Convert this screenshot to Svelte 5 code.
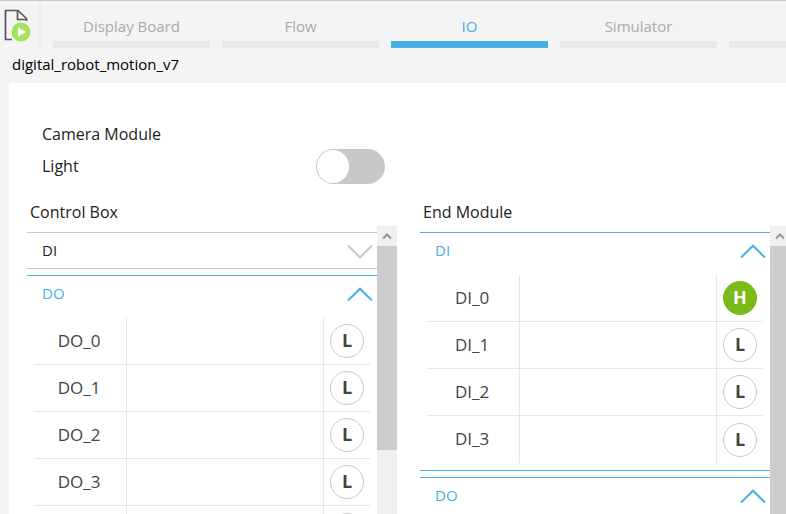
<script>
  const tabs = ['Display Board', 'Flow', 'IO', 'Simulator', ''];
  let activeTab = $state('IO');
  let light = $state(false);

  const channels = (prefix, count, high = []) =>
    Array.from({ length: count }, (_, i) => ({ name: `${prefix}_${i}`, high: high.includes(i) }));

  let modules = $state([
    {
      title: 'Control Box',
      thumb: 76,
      groups: [
        { name: 'DI', open: false, rows: channels('DI', 8) },
        { name: 'DO', open: true, rows: channels('DO', 5) }
      ]
    },
    {
      title: 'End Module',
      thumb: 100,
      groups: [
        { name: 'DI', open: true, rows: channels('DI', 4, [0]) },
        { name: 'DO', open: true, rows: channels('DO', 4) }
      ]
    }
  ]);
</script>

<div class="page">
  <header>
    <button class="run" aria-label="Run project">
      <svg width="28" height="34" viewBox="0 0 28 34" fill="none">
        <path d="M8 30.500H1.500V1.500H14L22.500 9.500V12" stroke="#555" stroke-width="1.700" />
        <path d="M13.500 2V10.500H22.500" stroke="#555" stroke-width="1.700" />
        <circle cx="17" cy="23" r="9.500" fill="#a6e35c" />
        <path d="M14 18.300V27.700L22 23Z" fill="#fff" />
      </svg>
    </button>
    <nav>
      {#each tabs as tab}
        <button class="tab" class:active={tab === activeTab} aria-label={tab || 'More'} onclick={() => (activeTab = tab)}>{tab}</button>
      {/each}
    </nav>
  </header>
  <h1>digital_robot_motion_v7</h1>

  <main>
    <section class="camera">
      <h2>Camera Module</h2>
      <div class="setting">
        <label for="light">Light</label>
        <input id="light" type="checkbox" role="switch" bind:checked={light} />
      </div>
    </section>

    <div class="modules">
      {#each modules as module}
        <section class="module">
          <h2>{module.title}</h2>
          <div class="panel">
            <div class="groups">
              {#each module.groups as group}
                <div class="group" class:open={group.open}>
                  <button class="toggle" aria-expanded={group.open} onclick={() => (group.open = !group.open)}>
                    <span>{group.name}</span>
                    <svg width="26" height="15" viewBox="0 0 26 15" fill="none" stroke="currentColor" stroke-width="2">
                      <path d={group.open ? 'M1 13.500L13 1.700L25 13.500' : 'M1 1.500L13 13.300L25 1.500'} />
                    </svg>
                  </button>
                  {#if group.open}
                    <table>
                      <tbody>
                        {#each group.rows as row}
                          <tr>
                            <th scope="row">{row.name}</th>
                            <td class="note"><input type="text" aria-label="{row.name} label" /></td>
                            <td class="level">
                              <button class:high={row.high} aria-label="{row.name} level" onclick={() => (row.high = !row.high)}>{row.high ? 'H' : 'L'}</button>
                            </td>
                          </tr>
                        {/each}
                      </tbody>
                    </table>
                  {/if}
                </div>
              {/each}
            </div>
            <div class="scrollbar">
              <button aria-label="Scroll up">
                <svg width="10" height="8" viewBox="0 0 10 8" fill="none" stroke="#999" stroke-width="2"><path d="M1 6.500L5 2.500L9 6.500" /></svg>
              </button>
              <div class="track"><div class="thumb" style="height: {module.thumb}%"></div></div>
            </div>
          </div>
        </section>
      {/each}
    </div>
  </main>
</div>

<style>
  :global(body) {
    margin: 0;
  }
  .page {
    display: flex;
    flex-direction: column;
    height: 100vh;
    box-sizing: border-box;
    overflow: hidden;
    border-top: 1px solid #c8c8c8;
    background: #f4f4f4;
    color: #222;
    font-family: 'Open Sans', 'Noto Sans', sans-serif;
    font-size: 16px;
  }
  button {
    border: 0;
    padding: 0;
    background: none;
    font: inherit;
    color: inherit;
    cursor: pointer;
  }
  h1,
  h2 {
    margin: 0;
    font-size: 16px;
    font-weight: 400;
    line-height: 24px;
  }
  header {
    display: flex;
    flex: none;
    height: 47px;
  }
  .run {
    display: flex;
    flex: none;
    box-sizing: border-box;
    width: 41px;
    padding: 8px 0 0 4px;
    border-right: 2px solid #eee;
  }
  nav {
    display: flex;
    flex: 1;
    gap: 12px;
    padding-left: 12px;
    overflow: hidden;
  }
  .tab {
    flex: 0 0 157px;
    border-bottom: 7px solid #e8e8e8;
    padding-top: 10px;
    color: #aaa;
    font-size: 15px;
    line-height: 28px;
  }
  .tab.active {
    color: #48b0e4;
    border-color: #48b0e4;
  }
  h1 {
    flex: none;
    padding: 4px 12px 7px;
    font-size: 15px;
    color: #000;
  }
  main {
    display: flex;
    flex: 1;
    flex-direction: column;
    min-height: 0;
    margin-left: 9px;
    background: #fff;
  }
  .camera {
    padding: 39px 33px 0;
  }
  .setting {
    display: flex;
    align-items: center;
    width: 343px;
    height: 40px;
    justify-content: space-between;
  }
  .setting input {
    appearance: none;
    width: 69px;
    height: 35px;
    margin: 0;
    padding: 1px;
    border-radius: 18px;
    background: #c8c8c8;
  }
  .setting input::before {
    content: '';
    display: block;
    width: 32px;
    height: 33px;
    border-radius: 50%;
    background: #fff;
  }
  .setting input:checked {
    background: #7aba19;
  }
  .setting input:checked::before {
    margin-left: auto;
  }
  .modules {
    display: grid;
    grid-template-columns: 1fr 1fr;
    gap: 23px;
    flex: 1;
    min-height: 0;
    margin: 14px -4px 0 18px;
  }
  .module {
    display: flex;
    flex-direction: column;
    min-width: 0;
    min-height: 0;
  }
  .module h2 {
    padding: 0 3px 2px;
  }
  .panel {
    display: flex;
    flex: 1;
    min-height: 0;
  }
  .groups {
    display: flex;
    flex: 1;
    flex-direction: column;
    gap: 6px;
    padding-top: 6px;
    overflow-y: auto;
    scrollbar-width: none;
  }
  .group {
    flex: none;
    border: solid #c8c8c8;
    border-width: 1px 0;
  }
  .group.open {
    padding-bottom: 7px;
    border-color: #48b0e4;
  }
  .toggle {
    display: flex;
    align-items: flex-start;
    justify-content: space-between;
    box-sizing: border-box;
    width: 100%;
    height: 35px;
    padding: 5px 4px 0 15px;
    font-size: 15px;
    line-height: 24px;
  }
  .toggle svg {
    margin-top: 6px;
    color: #c8c8c8;
  }
  .open .toggle,
  .open .toggle svg {
    color: #48b0e4;
  }
  table {
    width: calc(100% - 14px);
    margin: 7px 7px 0;
    border-spacing: 0;
    table-layout: fixed;
  }
  th,
  td {
    box-sizing: border-box;
    height: 47px;
    padding: 0;
    border-bottom: 1px solid #e6e6e6;
  }
  tr:last-child > * {
    border-bottom: 0;
  }
  th {
    width: 93px;
    padding: 0 2px 2px 0;
    border-right: 1px solid #e6e6e6;
    font-size: 17px;
    font-weight: 400;
    color: #444;
  }
  .note {
    border-right: 1px solid #e6e6e6;
  }
  .note input {
    display: block;
    box-sizing: border-box;
    width: 100%;
    height: 34px;
    padding: 0 8px;
    border: 0;
    background: none;
    font: inherit;
  }
  .level {
    width: 46px;
  }
  .level button {
    display: block;
    box-sizing: border-box;
    width: 34px;
    height: 34px;
    margin: 0 auto;
    border: 1px solid #c8c8c8;
    border-radius: 50%;
    font-size: 18px;
    font-weight: 700;
    line-height: 30px;
    padding-bottom: 2px;
    color: #444;
  }
  .level .high {
    border-color: #7aba19;
    background: #7aba19;
    color: #fff;
  }
  .scrollbar {
    display: flex;
    flex: none;
    flex-direction: column;
    width: 20px;
    background: #f0f0f0;
  }
  .scrollbar button {
    display: flex;
    align-items: center;
    justify-content: center;
    height: 20px;
  }
  .track {
    flex: 1;
  }
  .thumb {
    background: #cdcdcd;
  }
</style>
